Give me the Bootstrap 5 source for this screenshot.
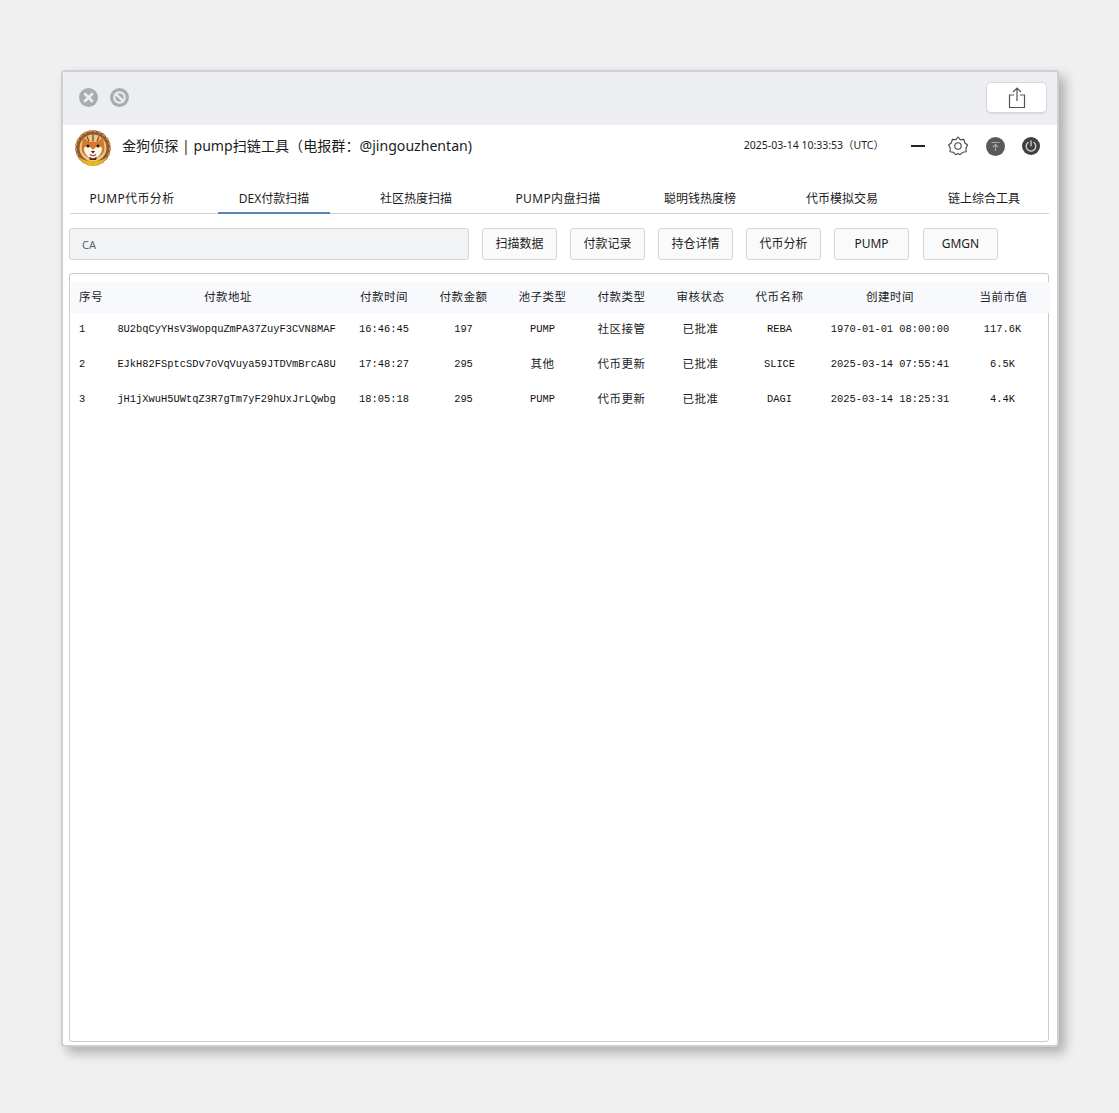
<!doctype html>
<html lang="zh"><head><meta charset="utf-8"><title>金狗侦探</title>
<link href="https://cdn.jsdelivr.net/npm/bootstrap@5.3.0/dist/css/bootstrap.min.css" rel="stylesheet">
<style>
html,body{height:100%}
body{background:#f0f0f1;font-family:"Noto Sans","Noto Sans CJK SC",sans-serif;color:#1c1c1c;padding:70px 0 0 61px}
.appwin{width:998px;height:977px;background:#fff;border:2px solid #cdcfd2;border-radius:4px;box-shadow:6px 6px 12px rgba(0,0,0,.28)}
.winbar{height:53px;background:#eceef1;padding:0 10px 2px 16px}
.dot{width:19px;height:19px;display:block}
.sharebtn{width:61px;height:31px;background:#fff;border:1px solid #d6d8db;border-radius:5px;padding:0;box-shadow:0 1px 1px rgba(0,0,0,.08)}
.apphead{height:42px;padding:0 17px 0 12px}
.applogo{margin-top:4px}
.apptitle{font-size:14.1px;margin-left:11px;line-height:20px}
.clock{font-size:10.5px;margin-right:27px}
.gapgear{margin-left:23px}
.gaparrow{margin-left:18px}
.gappower{margin-left:17px}
.tabbar{margin:13px 8px 0 7px;padding-left:6px;gap:30px;border-bottom:1px solid #cfd1d4;height:34px}
.tabitem{width:112px;height:34px;padding:3px 0 0;text-align:center;font-size:12px;line-height:32px;color:#1c1c1c;white-space:nowrap}
.tabitem.on{border-bottom:2px solid #5b84b8;color:#1c1c1c}
.tabwide{letter-spacing:.35px}
.toolrow{padding:14px 0 0 6px;gap:13px}
.cainput{width:400px;height:32px;flex:none;background:#f1f3f5;border:1px solid #d5d8dc;border-radius:3px;font-size:11px;padding:0 12px;color:#5f6368}
.cainput::placeholder{color:#5f6368;opacity:1}
.toolbtn{width:75px;height:32px;flex:none;padding:0;background:#fafafa;border:1px solid #d3d5d7;border-radius:3px;font-size:12px;color:#1c1c1c}
.toolbtn.lastbtn{margin-left:1px}
.datapanel{margin:13px 8px 0 6px;height:769px;border:1px solid #c9cbce;border-radius:3px;padding:8px 0 0 1px}
.datatable{table-layout:fixed;width:979px;margin:0;font-size:11.5px;letter-spacing:.55px;color:#222}
.datatable th{height:31px;padding:0 0 1px;background:#f7f9fd;font-weight:400;text-align:center;vertical-align:middle;border:0}
.datatable td{height:35px;padding:0 0 4px;text-align:center;vertical-align:middle;border:0;white-space:nowrap}
.datatable .seq{text-align:left;padding-left:8px}
.datatable .addr{padding-right:3px}
.datatable th:last-child{padding-right:4px}
.datatable td:last-child{padding-right:6px}
.datatable td.mono{font-family:"Liberation Mono","Noto Sans CJK SC",monospace;font-size:10.4px;letter-spacing:0;padding-bottom:2px;color:#111}
</style></head>
<body>
<div class="appwin d-flex flex-column">
  <div class="winbar d-flex align-items-center gap-2">
    <svg class="dot" viewBox="0 0 19 19"><circle cx="9.5" cy="9.5" r="9.5" fill="#a9adb2"/><path d="M6 6l7 7M13 6l-7 7" stroke="#eceef1" stroke-width="2.6" stroke-linecap="round"/></svg>
    <svg class="dot ms-1" viewBox="0 0 19 19"><circle cx="9.5" cy="9.5" r="9.5" fill="#a9adb2"/><circle cx="9.5" cy="9.5" r="5.2" fill="none" stroke="#eceef1" stroke-width="2"/><path d="M6 6l7 7" stroke="#eceef1" stroke-width="2.4"/></svg>
    <button class="sharebtn ms-auto d-flex align-items-center justify-content-center" type="button" aria-label="share">
      <svg width="18" height="22" viewBox="0 0 18 22" fill="none" stroke="#555" stroke-width="1.2"><path d="M6 8H1.500v12.500h15V8H12"/><path d="M9 14V1.500M5 5l4-4 4 4"/></svg>
    </button>
  </div>
  <div class="apphead d-flex align-items-center">
    <svg class="applogo flex-shrink-0" width="36" height="36" viewBox="0 0 36 36">
      <circle cx="18" cy="18" r="17.500" fill="#8f5a2a"/>
      <circle cx="18" cy="18" r="17" fill="none" stroke="#c9924f" stroke-width="2" stroke-dasharray="3 2"/>
      <circle cx="18" cy="18" r="13.500" fill="#e9c48c"/>
      <path d="M8 7l6 5h8l6-5 1.500 11c0 6-5 10-11.500 10S6.500 24 6.500 18z" fill="#d67a2a"/>
      <path d="M12 6.500l2 5M18 4.500v7M24 6.500l-2 5" stroke="#7a4418" stroke-width="1.200"/>
      <path d="M9 18c3-3 6-2 9 2 3-4 6-5 9-2 0 6-4 10-9 10s-9-4-9-10z" fill="#fdf6ea"/>
      <circle cx="13" cy="16" r="1.500" fill="#2a1a10"/><circle cx="23" cy="16" r="1.500" fill="#2a1a10"/>
      <path d="M16 21h4l-2 2.500z" fill="#2a1a10"/>
      <path d="M15 24.500c2 1.500 4 1.500 6 0" stroke="#c9413a" stroke-width="1.200" fill="none"/>
      <path d="M4 27c4 3 8 4 14 4s10-1 14-4c-3 5-8 8.500-14 8.500S7 32 4 27z" fill="#eab620"/>
      <path d="M14 27l4 1.500 4-1.500-1 3h-6z" fill="#4d2c12"/>
    </svg>
    <div class="apptitle">金狗侦探 | pump扫链工具（电报群：@jingouzhentan)</div>
    <div class="clock ms-auto">2025-03-14 10:33:53（UTC）</div>
    <svg width="14" height="20" viewBox="0 0 14 20"><rect y="9" width="14" height="2" fill="#222"/></svg>
    <svg width="20" height="20" viewBox="0 0 20 20" fill="none" stroke="#444" stroke-width="1.100" class="gapgear"><path d="M10 1l2.300 2.700 3.600-.3.900 3.400 2.700 2.200-1.600 3.200.3 3.500-3.500.6L12 18.700l-2-1.200-2.300 1.200-2.200-2.400-3.500-.6.300-3.500L.7 9l2.700-2.200.9-3.400 3.600.3z" stroke-linejoin="round"/><circle cx="10" cy="10" r="3.200"/></svg>
    <svg width="19" height="19" viewBox="0 0 19 19" class="gaparrow"><circle cx="9.500" cy="9.500" r="9.500" fill="#595959"/><path d="M5.500 5.500h8M9.500 14V8M7 10l2.500-2.500L12 10" stroke="#a8a8a8" stroke-width="1.100" fill="none"/></svg>
    <svg width="18" height="18" viewBox="0 0 18 18" class="gappower"><circle cx="9" cy="9" r="9" fill="#3f3f3f"/><path d="M6 5.500a4.800 4.800 0 1 0 6 0M9 3.800v5" stroke="#d5d5d5" stroke-width="1.300" fill="none" stroke-linecap="round"/></svg>
  </div>
  <nav class="nav tabbar flex-nowrap">
    <a class="nav-link tabitem tabwide" href="#">PUMP代币分析</a>
    <a class="nav-link tabitem on" href="#">DEX付款扫描</a>
    <a class="nav-link tabitem" href="#">社区热度扫描</a>
    <a class="nav-link tabitem tabwide" href="#">PUMP内盘扫描</a>
    <a class="nav-link tabitem" href="#">聪明钱热度榜</a>
    <a class="nav-link tabitem" href="#">代币模拟交易</a>
    <a class="nav-link tabitem" href="#">链上综合工具</a>
  </nav>
  <div class="toolrow d-flex">
    <input class="form-control cainput" placeholder="CA" aria-label="CA">
    <button class="btn toolbtn" type="button">扫描数据</button>
    <button class="btn toolbtn" type="button">付款记录</button>
    <button class="btn toolbtn" type="button">持仓详情</button>
    <button class="btn toolbtn" type="button">代币分析</button>
    <button class="btn toolbtn" type="button">PUMP</button>
    <button class="btn toolbtn lastbtn" type="button">GMGN</button>
  </div>
  <div class="datapanel">
    <table class="table datatable">
      <colgroup><col style="width:41px"><col style="width:232px"><col style="width:80px"><col style="width:79px"><col style="width:79px"><col style="width:79px"><col style="width:79px"><col style="width:79px"><col style="width:142px"><col style="width:89px"></colgroup>
      <thead><tr><th class="seq">序号</th><th>付款地址</th><th>付款时间</th><th>付款金额</th><th>池子类型</th><th>付款类型</th><th>审核状态</th><th>代币名称</th><th>创建时间</th><th>当前市值</th></tr></thead>
      <tbody>
        <tr><td class="seq mono">1</td><td class="mono addr">8U2bqCyYHsV3WopquZmPA37ZuyF3CVN8MAF</td><td class="mono">16:46:45</td><td class="mono">197</td><td class="mono">PUMP</td><td>社区接管</td><td>已批准</td><td class="mono">REBA</td><td class="mono">1970-01-01 08:00:00</td><td class="mono">117.6K</td></tr>
        <tr><td class="seq mono">2</td><td class="mono addr">EJkH82FSptcSDv7oVqVuya59JTDVmBrcA8U</td><td class="mono">17:48:27</td><td class="mono">295</td><td>其他</td><td>代币更新</td><td>已批准</td><td class="mono">SLICE</td><td class="mono">2025-03-14 07:55:41</td><td class="mono">6.5K</td></tr>
        <tr><td class="seq mono">3</td><td class="mono addr">jH1jXwuH5UWtqZ3R7gTm7yF29hUxJrLQwbg</td><td class="mono">18:05:18</td><td class="mono">295</td><td class="mono">PUMP</td><td>代币更新</td><td>已批准</td><td class="mono">DAGI</td><td class="mono">2025-03-14 18:25:31</td><td class="mono">4.4K</td></tr>
      </tbody>
    </table>
  </div>
</div>
<script src="https://cdn.jsdelivr.net/npm/bootstrap@5.3.0/dist/js/bootstrap.bundle.min.js"></script>
</body></html>
